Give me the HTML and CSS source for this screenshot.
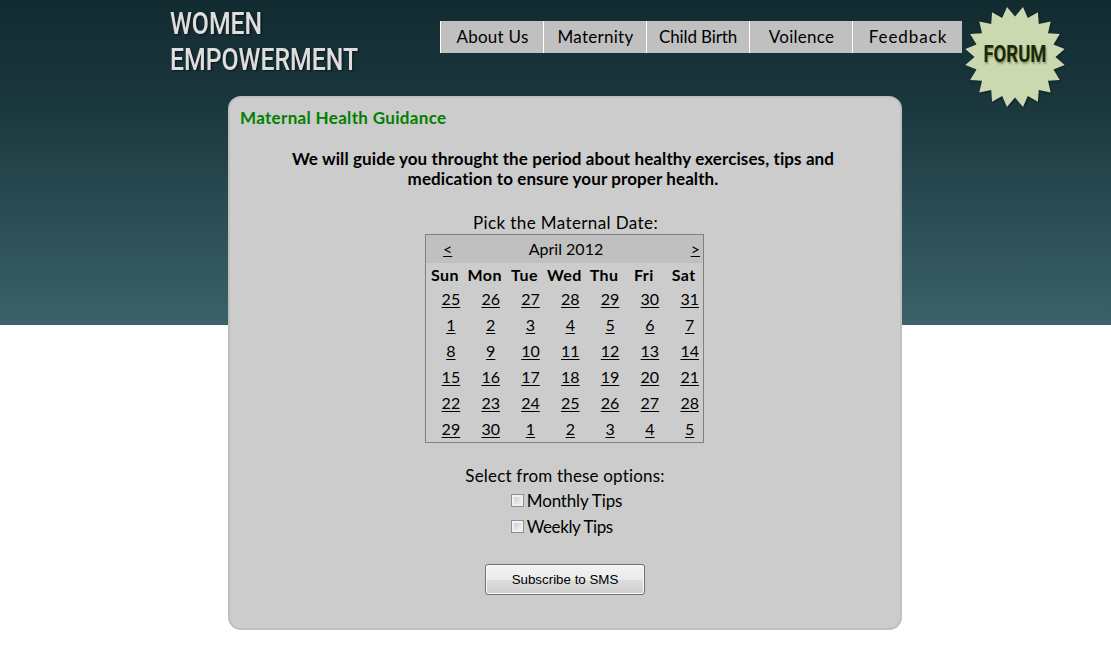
FILE: index.html
```html
<!DOCTYPE html>
<html lang="en">
<head>
<meta charset="utf-8">
<title>Women Empowerment</title>
<link rel="stylesheet" href="styles.css">
</head>
<body>
<header class="header">
  <h1 class="logo">WOMEN<br>EMPOWERMENT</h1>
  <nav class="nav">
    <a class="nav-item" href="#">About Us</a>
    <a class="nav-item" href="#">Maternity</a>
    <a class="nav-item nav-tight" href="#">Child Birth</a>
    <a class="nav-item" href="#">Voilence</a>
    <a class="nav-item nav-wide" href="#">Feedback</a>
  </nav>
  <a class="forum" href="#">
    <svg width="104" height="106" viewBox="963 4 104 106" aria-hidden="true">
      <g transform="translate(1015 57)">
        <polygon class="burst" points="0,-40.5 8,-50 12.8,-39 22.9,-44.8 23.8,-33 35.7,-35.4 33,-23.8 44.8,-22.9 38.5,-12.5 49.7,-8 40.5,0 49.7,8 38.5,12.5 44.8,22.9 33,23.8 35.7,35.4 23.8,33 22.9,44.8 12.8,39 8,50 0,40.5 -8,50 -12.8,39 -22.9,44.8 -23.8,33 -35.7,35.4 -33,23.8 -44.8,22.9 -38.5,12.5 -49.7,8 -40.5,0 -49.7,-8 -38.5,-12.5 -44.8,-22.9 -33,-23.8 -35.7,-35.4 -23.8,-33 -22.9,-44.8 -12.8,-39 -8,-50"/>
        <text class="burst-text" transform="translate(0 5) scale(.77 1)" text-anchor="middle">FORUM</text>
      </g>
    </svg>
  </a>
</header>
<main class="panel">
  <h2 class="title">Maternal Health Guidance</h2>
  <p class="intro">We will guide you throught the period about healthy exercises, tips and<br>medication to ensure your proper health.</p>
  <div class="pick">Pick the Maternal Date:</div>
  <div class="calendar">
    <div class="month"><a href="#">&lt;</a><span class="month-name">April 2012</span><a href="#">&gt;</a></div>
    <div class="week names"><span>Sun</span><span>Mon</span><span>Tue</span><span>Wed</span><span>Thu</span><span>Fri</span><span>Sat</span></div>
    <div class="week"><a href="#">25</a><a href="#">26</a><a href="#">27</a><a href="#">28</a><a href="#">29</a><a href="#">30</a><a href="#">31</a></div>
    <div class="week"><a href="#">1</a><a href="#">2</a><a href="#">3</a><a href="#">4</a><a href="#">5</a><a href="#">6</a><a href="#">7</a></div>
    <div class="week"><a href="#">8</a><a href="#">9</a><a href="#">10</a><a href="#">11</a><a href="#">12</a><a href="#">13</a><a href="#">14</a></div>
    <div class="week"><a href="#">15</a><a href="#">16</a><a href="#">17</a><a href="#">18</a><a href="#">19</a><a href="#">20</a><a href="#">21</a></div>
    <div class="week"><a href="#">22</a><a href="#">23</a><a href="#">24</a><a href="#">25</a><a href="#">26</a><a href="#">27</a><a href="#">28</a></div>
    <div class="week"><a href="#">29</a><a href="#">30</a><a href="#">1</a><a href="#">2</a><a href="#">3</a><a href="#">4</a><a href="#">5</a></div>
  </div>
  <div class="options-label">Select from these options:</div>
  <div class="options">
    <label class="option"><input class="check" type="checkbox">Monthly Tips</label>
    <label class="option weekly"><input class="check" type="checkbox">Weekly Tips</label>
  </div>
  <button class="subscribe" type="button">Subscribe to SMS</button>
</main>
</body>
</html>
```
FILE: styles.css
```css
* { box-sizing: border-box; }
body {
  margin: 0;
  height: 645px;
  overflow: hidden;
  background: #fff linear-gradient(#122b31, #19363c 96px, #3a6268 324px) 0 0 / 100% 325px no-repeat;
  font: 17px/20px "Century Gothic", Lato, sans-serif;
  font-variant-ligatures: none;
  color: #000;
}
a { color: inherit; }
.header { display: flex; align-items: flex-start; height: 96px; padding-left: 170px; }
.logo {
  width: 270px;
  margin: 5px 0 0;
  font: 500 32px/36px Roboto, sans-serif;
  color: #e1dddd;
  text-shadow: 2px 1px 2px #0a1c20;
  transform: scaleX(.775);
  transform-origin: 0 0;
}
.nav { display: flex; margin-top: 21px; }
.nav-item {
  width: 103px;
  height: 32px;
  padding-left: 1px;
  border-left: 1px solid #fff;
  background: #c0c0c0;
  line-height: 32px;
  text-align: center;
  text-decoration: none;
  letter-spacing: .27px;
}
.nav-tight { padding-left: 0; letter-spacing: -.12px; }
.nav-wide { width: 110px; letter-spacing: .95px; }
.forum { margin: 4px 0 0 1px; }
.forum svg { display: block; }
.burst { fill: #ccd8b0; filter: drop-shadow(1px 1px 1px #0b2226); }
.burst-text {
  font: 700 24px Roboto, sans-serif;
  fill: #182a09;
  text-shadow: 1px 2px 2px #8c9b70;
}
.panel {
  display: flex;
  flex-direction: column;
  align-items: center;
  width: 674px;
  height: 534px;
  margin-left: 228px;
  border: 2px solid #bfbfbf;
  border-radius: 13px;
  background: #ccc;
}
.title {
  align-self: flex-start;
  margin: 10px 0 0 10px;
  font-size: 17px;
  line-height: 20px;
  color: #008000;
  letter-spacing: .33px;
}
.intro { margin: 21px 4px 0 0; font-weight: 700; text-align: center; letter-spacing: .1px; }
.pick { margin: 24px 0 1px 1px; letter-spacing: .4px; }
.calendar {
  width: 279px;
  height: 209px;
  margin-right: 1px;
  border: 1px solid #808080;
  font-size: 16px;
}
.month {
  display: flex;
  justify-content: space-between;
  height: 28px;
  padding: 0 3px 0 17px;
  background: #c0c0c0;
  line-height: 27px;
}
.month-name { margin-right: 11px; }
.week {
  display: grid;
  grid-template-columns: repeat(7, 39.8px);
  height: 26px;
  line-height: 24px;
  padding-left: 5px;
  text-align: center;
}
.names { height: 24px; padding-left: 0; margin-left: -1px; line-height: 24px; font-weight: 700; letter-spacing: .4px; }
.week a { text-underline-offset: 2px; }
.options-label { margin-top: 23px; letter-spacing: .18px; }
.options { margin: 2px 0 0 3px; }
.option { display: flex; align-items: center; height: 26px; letter-spacing: -.15px; }
.weekly { letter-spacing: -.4px; }
.check {
  appearance: none;
  width: 13px;
  height: 13px;
  margin: 0 3px 2px 0;
  border: 1px solid #8e8f8f;
  background: linear-gradient(135deg, #c4c9ce, #f8f8f8);
  box-shadow: inset 0 0 0 2px #f1f1f1;
}
.subscribe {
  width: 160px;
  height: 31px;
  margin: 24px 0 0;
  border: 1px solid #707070;
  border-radius: 3px;
  padding: 0;
  background: linear-gradient(#f2f2f2, #ebebeb 50%, #ddd 50%, #cfcfcf);
  box-shadow: inset 0 0 0 1px #fafafa;
  font: 13.333px "Liberation Sans", Arial, sans-serif;
  color: #000;
}
```
